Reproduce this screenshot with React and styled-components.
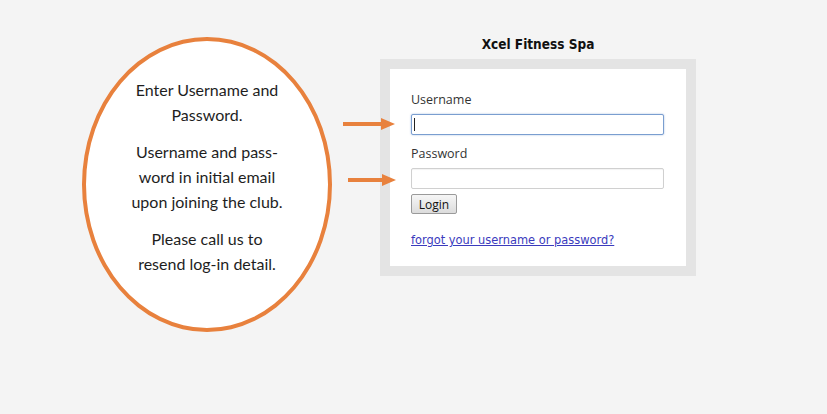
import React from "react";
import styled, { createGlobalStyle } from "styled-components";

const GlobalStyle = createGlobalStyle`
  html, body {
    margin: 0;
    padding: 0;
    background: #f4f4f4;
  }
  body {
    font-family: "Open Sans", "Liberation Sans", sans-serif;
  }
`;

const Arrow = ({ width }) => (
  <svg width={width} height="12" viewBox={`0 0 ${width} 12`}>
    <rect x="0" y="4" width={width - 12} height="4" fill="#e8813d" />
    <polygon points={`${width - 14},0 ${width},6 ${width - 14},12`} fill="#e8813d" />
  </svg>
);

const App = () => {
  return (
    <Page>
      <GlobalStyle />
      <Bubble>
        <Note>
          Enter Username and
          <br />
          Password.
        </Note>
        <Note>
          Username and pass-
          <br />
          word in initial email
          <br />
          upon joining the club.
        </Note>
        <Note>
          Please call us to
          <br />
          resend log-in detail.
        </Note>
      </Bubble>

      <FormColumn>
        <Title>Xcel Fitness Spa</Title>
        <Panel>
          <Label>Username</Label>
          <Field>
            <Pointer left={-68} top={0}>
              <Arrow width={52} />
            </Pointer>
            <TextBox focused />
            <Caret />
          </Field>
          <Label spaced>Password</Label>
          <Field>
            <Pointer left={-63} top={2}>
              <Arrow width={48} />
            </Pointer>
            <TextBox type="password" />
          </Field>
          <LoginButton>Login</LoginButton>
          <ForgotLink href="#">forgot your username or password?</ForgotLink>
        </Panel>
      </FormColumn>
    </Page>
  );
};

const Page = styled.div`
  display: flex;
  align-items: flex-start;
  height: 414px;
  padding-left: 82px;
  box-sizing: border-box;
`;

const Bubble = styled.div`
  margin-top: 37px;
  width: 250px;
  height: 295px;
  box-sizing: border-box;
  border: 4px solid #e8813d;
  border-radius: 50%;
  background: #fff;
  padding-top: 36px;
  display: flex;
  flex-direction: column;
  align-items: center;
  gap: 12px;
  font-family: Lato, "Open Sans", sans-serif;
  font-size: 16px;
  line-height: 25px;
  color: #1e1e1e;
  text-align: center;
`;

const Note = styled.p`
  margin: 0;
`;

const FormColumn = styled.div`
  margin-left: 48px;
  margin-top: 36px;
  width: 316px;
  display: flex;
  flex-direction: column;
  align-items: center;
`;

const Title = styled.h1`
  margin: 0 0 7px;
  font-family: "DejaVu Sans Condensed", "DejaVu Sans", sans-serif;
  font-weight: bold;
  font-size: 13.5px;
  line-height: 16px;
  color: #111;
`;

const Panel = styled.div`
  width: 100%;
  box-sizing: border-box;
  border: 10px solid #e4e4e4;
  background: #fff;
  padding: 23px 22px 19px 21px;
  display: flex;
  flex-direction: column;
  align-items: flex-start;
`;

const Label = styled.label`
  font-size: 12.5px;
  line-height: 16px;
  color: #333;
  margin-top: ${(p) => (p.spaced ? "11px" : "0")};
  margin-bottom: 6px;
`;

const Field = styled.div`
  position: relative;
  width: 253px;
  height: 21px;
`;

const Pointer = styled.div`
  position: absolute;
  left: ${(p) => p.left}px;
  top: ${(p) => 4 + p.top}px;
  line-height: 0;
`;

const TextBox = styled.input`
  display: block;
  width: 100%;
  height: 100%;
  box-sizing: border-box;
  margin: 0;
  padding: 0 3px;
  outline: none;
  background: #fff;
  border: 1px solid ${(p) => (p.focused ? "#7a9ed0" : "#d0d0d0")};
  border-radius: 2px;
  box-shadow: ${(p) =>
    p.focused ? "0 0 2px rgba(100, 140, 200, 0.6)" : "inset 0 1px 1px rgba(0,0,0,0.05)"};
`;

const Caret = styled.span`
  position: absolute;
  left: 3px;
  top: 4px;
  width: 1px;
  height: 13px;
  background: #222;
`;

const LoginButton = styled.button`
  margin-top: 5px;
  width: 46px;
  height: 20px;
  padding: 0;
  font-family: "Open Sans", "Liberation Sans", sans-serif;
  font-size: 12px;
  color: #111;
  border: 1px solid #9a9a9a;
  border-radius: 2px;
  background: linear-gradient(#f6f6f6, #dcdcdc);
`;

const ForgotLink = styled.a`
  margin-top: 19px;
  font-family: "DejaVu Sans Condensed", "DejaVu Sans", sans-serif;
  font-size: 12.7px;
  line-height: 14px;
  color: #3b3bbd;
  text-decoration: underline;
`;

export default App;
